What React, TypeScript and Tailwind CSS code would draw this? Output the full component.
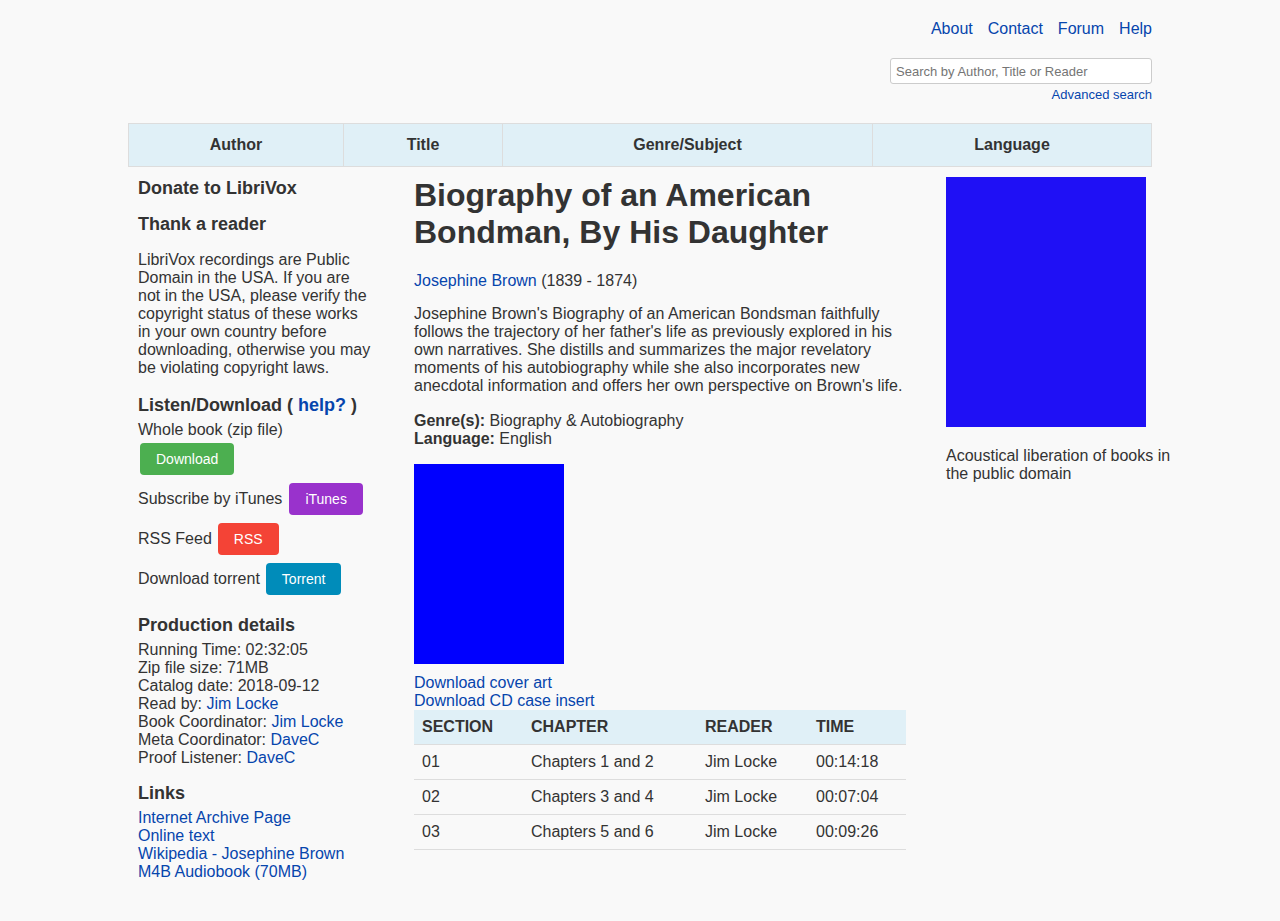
const link = 'text-[#0645ad] hover:underline';

function Btn({ label, color }: { label: string; color: string }) {
  return (
    <a
      href="#"
      className={`inline-flex h-[32px] items-center rounded-[4px] px-[16px] text-[14px] text-white ${color}`}
    >
      {label}
    </a>
  );
}

const chapters = [
  { section: '01', chapter: 'Chapters 1 and 2', reader: 'Jim Locke', time: '00:14:18' },
  { section: '02', chapter: 'Chapters 3 and 4', reader: 'Jim Locke', time: '00:07:04' },
  { section: '03', chapter: 'Chapters 5 and 6', reader: 'Jim Locke', time: '00:09:26' },
];

function LeftColumn() {
  return (
    <aside className="ml-[10px] w-[246px] shrink-0 pt-[11px]">
      <h4 className="text-[18px] font-bold leading-[21px]">Donate to LibriVox</h4>
      <h4 className="mt-[15px] text-[18px] font-bold leading-[21px]">Thank a reader</h4>
      <p className="mt-[16px] w-[236px] leading-[18px]">
        LibriVox recordings are Public Domain in the USA. If you are not in the USA, please verify the
        copyright status of these works in your own country before downloading, otherwise you may be
        violating copyright laws.
      </p>

      <h4 className="mt-[18px] text-[18px] font-bold leading-[21px]">
        Listen/Download ({' '}
        <a href="#" className={link}>
          help?
        </a>{' '}
        )
      </h4>
      <div className="mt-[5px] leading-[18px]">Whole book (zip file)</div>
      <div className="mt-[4px] flex flex-col gap-[8px]">
        <div className="flex h-[32px] items-center pl-[2px]">
          <Btn label="Download" color="bg-[#4caf50]" />
        </div>
        <div className="flex h-[32px] items-center gap-[7px]">
          <span>Subscribe by iTunes</span>
          <Btn label="iTunes" color="bg-[#9932cc]" />
        </div>
        <div className="flex h-[32px] items-center gap-[6px]">
          <span>RSS Feed</span>
          <Btn label="RSS" color="bg-[#f44336]" />
        </div>
        <div className="flex h-[32px] items-center gap-[6px]">
          <span>Download torrent</span>
          <Btn label="Torrent" color="bg-[#008cba]" />
        </div>
      </div>

      <h4 className="mt-[20px] text-[18px] font-bold leading-[21px]">Production details</h4>
      <div className="mt-[5px] leading-[18px]">
        <div>Running Time: 02:32:05</div>
        <div>Zip file size: 71MB</div>
        <div>Catalog date: 2018-09-12</div>
        <div>
          Read by: <a href="#" className={link}>Jim Locke</a>
        </div>
        <div>
          Book Coordinator: <a href="#" className={link}>Jim Locke</a>
        </div>
        <div>
          Meta Coordinator: <a href="#" className={link}>DaveC</a>
        </div>
        <div>
          Proof Listener: <a href="#" className={link}>DaveC</a>
        </div>
      </div>

      <h4 className="mt-[16px] text-[18px] font-bold leading-[21px]">Links</h4>
      <div className="mt-[5px] flex flex-col leading-[18px]">
        <a href="#" className={link}>Internet Archive Page</a>
        <a href="#" className={link}>Online text</a>
        <a href="#" className={link}>Wikipedia - Josephine Brown</a>
        <a href="#" className={link}>M4B Audiobook (70MB)</a>
      </div>
    </aside>
  );
}

function MainColumn() {
  return (
    <main className="ml-[30px] w-[492px] shrink-0 pt-[10px]">
      <h1 className="text-[32px] font-bold leading-[37px]">
        Biography of an American Bondman, By His Daughter
      </h1>
      <p className="mt-[21px] leading-[18px]">
        <a href="#" className={link}>Josephine Brown</a> (1839 - 1874)
      </p>
      <p className="mt-[15px] leading-[18px]">
        Josephine Brown's Biography of an American Bondsman faithfully follows the trajectory of her
        father's life as previously explored in his own narratives. She distills and summarizes the major
        revelatory moments of his autobiography while she also incorporates new anecdotal information and
        offers her own perspective on Brown's life.
      </p>
      <p className="mt-[17px] leading-[18px]">
        <span className="font-bold">Genre(s):</span> Biography &amp; Autobiography
        <br />
        <span className="font-bold">Language:</span> English
      </p>
      <div className="mt-[16px] h-[200px] w-[150px] bg-[#0000ff]" />
      <div className="mt-[10px] flex flex-col leading-[18px]">
        <a href="#" className={link}>Download cover art</a>
        <a href="#" className={link}>Download CD case insert</a>
      </div>
      <table className="w-full border-collapse text-left">
        <thead>
          <tr className="h-[34px] border-b border-[#dddddd] bg-[#e0f0f7]">
            <th className="w-[109px] px-[8px] font-bold">SECTION</th>
            <th className="w-[174px] px-[8px] font-bold">CHAPTER</th>
            <th className="w-[111px] px-[8px] font-bold">READER</th>
            <th className="px-[8px] font-bold">TIME</th>
          </tr>
        </thead>
        <tbody>
          {chapters.map((c) => (
            <tr key={c.section} className="h-[35px] border-b border-[#dddddd]">
              <td className="px-[8px]">{c.section}</td>
              <td className="px-[8px]">{c.chapter}</td>
              <td className="px-[8px]">{c.reader}</td>
              <td className="px-[8px]">{c.time}</td>
            </tr>
          ))}
        </tbody>
      </table>
    </main>
  );
}

function RightColumn() {
  return (
    <aside className="ml-[40px] w-[234px] shrink-0 pt-[10px]">
      <div className="h-[250px] w-[200px] bg-[#1f10f5]" />
      <p className="mt-[20px] leading-[18px]">Acoustical liberation of books in the public domain</p>
    </aside>
  );
}

export default function App() {
  return (
    <div className="min-h-screen bg-[#f9f9f9] font-['Liberation_Sans',Arial,sans-serif] text-[16px] text-[#333333]">
      <div className="mx-auto w-[1024px] pt-[20px] pb-[40px]">
        <nav className="flex justify-end gap-[15px] leading-[18px]">
          <a href="#" className={link}>About</a>
          <a href="#" className={link}>Contact</a>
          <a href="#" className={link}>Forum</a>
          <a href="#" className={link}>Help</a>
        </nav>

        <div className="mt-[20px] flex justify-end">
          <input
            type="text"
            placeholder="Search by Author, Title or Reader"
            className="h-[26px] w-[262px] rounded-[3px] border border-[#cccccc] bg-white px-[5px] text-[13px] placeholder:text-[#757575] focus:outline-none"
          />
        </div>
        <div className="mt-[3px] text-right text-[13px] leading-[15px]">
          <a href="#" className={link}>Advanced search</a>
        </div>

        <div className="mt-[21px] flex h-[44px] border border-[#dddddd] bg-[#e0f0f7] font-bold">
          <div className="flex w-[215px] items-center justify-center border-r border-[#dddddd]">Author</div>
          <div className="flex w-[159px] items-center justify-center border-r border-[#dddddd]">Title</div>
          <div className="flex w-[370px] items-center justify-center border-r border-[#dddddd]">Genre/Subject</div>
          <div className="flex flex-1 items-center justify-center">Language</div>
        </div>

        <div className="flex">
          <LeftColumn />
          <MainColumn />
          <RightColumn />
        </div>
      </div>
    </div>
  );
}
